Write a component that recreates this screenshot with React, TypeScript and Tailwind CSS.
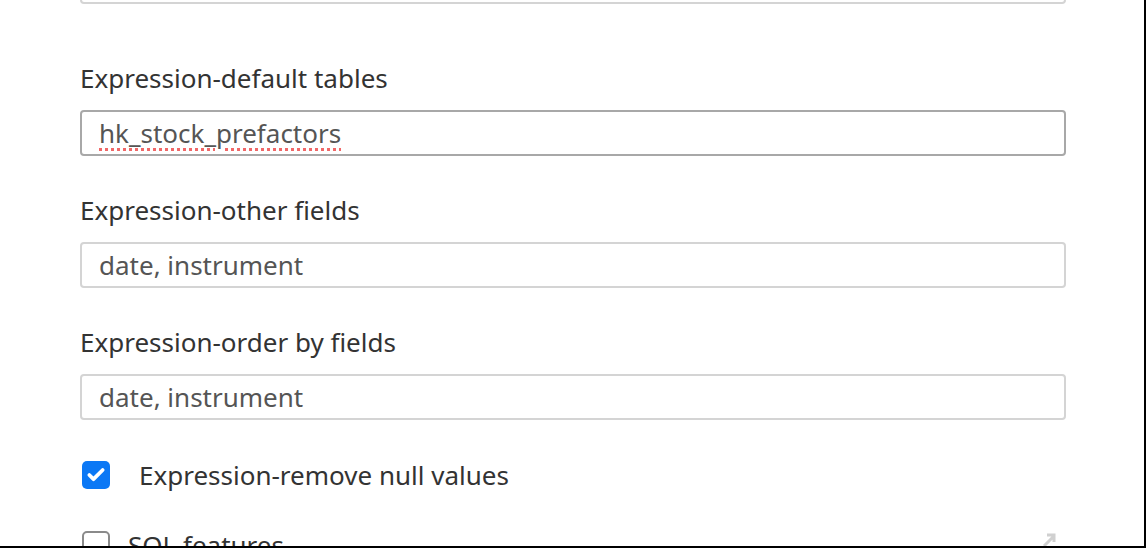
import { Check } from 'lucide-react';

const font = { fontFamily: '"Noto Sans", "Open Sans", sans-serif' };

function Field({ label, value, focused, spell }: { label: string; value: string; focused?: boolean; spell?: boolean }) {
  return (
    <div className="flex flex-col">
      <label className="text-[26px] leading-[34px] text-[#333333]">{label}</label>
      <div
        className={`mt-[15px] h-[46px] flex items-center rounded-[4px] border-2 pl-[17px] ${
          focused ? 'border-[#a8a8a8]' : 'border-[#d4d4d4]'
        }`}
      >
        <span
          className={`text-[26px] leading-[34px] text-[#555555] ${
            spell ? 'underline decoration-dotted decoration-[#f06868] decoration-[3px] underline-offset-[5px]' : ''
          }`}
        >
          {value}
        </span>
      </div>
    </div>
  );
}

export default function App() {
  return (
    <div
      className="relative w-[1146px] h-[548px] overflow-hidden bg-white border-r-2 border-b-2 border-black"
      style={font}
    >
      <div className="ml-[80px] w-[986px] flex flex-col">
        {/* previous field, scrolled off the top */}
        <div className="-mt-[42px] h-[46px] rounded-[4px] border-2 border-[#d4d4d4]" />

        <div className="mt-[57px] flex flex-col gap-[37px]">
          <Field label="Expression-default tables" value="hk_stock_prefactors" focused spell />
          <Field label="Expression-other fields" value="date, instrument" />
          <Field label="Expression-order by fields" value="date, instrument" />
        </div>

        <div className="mt-[38px] flex items-center">
          <div className="ml-[2px] w-[28px] h-[28px] rounded-[5px] bg-[#0b78f5] flex items-center justify-center">
            <Check className="w-[20px] h-[20px] text-white" strokeWidth={4.5} />
          </div>
          <span className="ml-[29px] text-[26px] leading-[34px] text-[#333333]">Expression-remove null values</span>
        </div>

        <div className="mt-[36px] flex items-center">
          <div className="ml-[2px] w-[28px] h-[28px] rounded-[5px] border-2 border-[#8a8a8a]" />
          <span className="ml-[18px] text-[26px] leading-[34px] text-[#333333]">SQL features</span>
        </div>
      </div>

      {/* resize grip */}
      <svg
        className="absolute left-[1042px] top-[533px]"
        width="14"
        height="14"
        viewBox="0 0 14 14"
      >
        <path d="M2 13 L11 4 M5 2 H12 V9" stroke="#d0d0d0" strokeWidth="3" fill="none" />
      </svg>
    </div>
  );
}
